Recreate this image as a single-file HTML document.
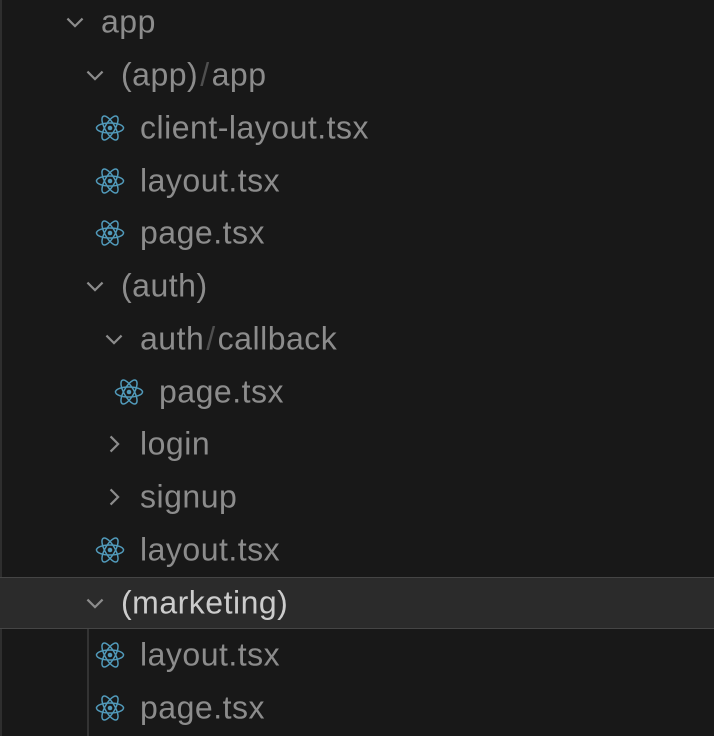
<!DOCTYPE html><html><head><style>
body{margin:0;width:714px;height:736px;background:#181818;overflow:hidden;position:relative;font-family:"Liberation Sans",sans-serif;}
.r{position:absolute;left:0;width:714px;height:52px;}
.t{position:absolute;top:50%;transform:translateY(-50%);font-size:32px;letter-spacing:0.5px;color:#8c8c8c;white-space:nowrap;}
.s{color:#4f4f4f;margin:0 2px}
.c,.i{position:absolute;top:50%;transform:translateY(-50%);}
.sel{background:#2b2b2b;border-top:1px solid #454545;border-bottom:1px solid #454545;}
</style></head><body>
<div style="position:absolute;left:0;top:0;width:2px;height:736px;background:#2e2e2e"></div>
<div style="position:absolute;left:87px;top:629px;width:2px;height:107px;background:#333"></div>
<svg width="0" height="0" style="position:absolute"><defs>
<symbol id="dn" viewBox="0 0 16 16"><path d="M2.5 5.5l5.5 5.5 5.5-5.5" fill="none" stroke="#8c8c8c" stroke-width="1.6"/></symbol>
<symbol id="rt" viewBox="0 0 16 16"><path d="M5.5 2.5l5.5 5.5-5.5 5.5" fill="none" stroke="#8c8c8c" stroke-width="1.6"/></symbol>
<symbol id="at" viewBox="0 0 30 28"><g fill="none" stroke="#519aba" stroke-width="1.5" transform="translate(15 14)"><ellipse rx="13.5" ry="5"/><ellipse rx="13.5" ry="5" transform="rotate(60)"/><ellipse rx="13.5" ry="5" transform="rotate(120)"/></g><circle cx="15" cy="14" r="2.3" fill="#519aba"/></symbol>
</defs></svg>
<div class="r" style="top:-4px"><svg class="c" style="left:64px" width="22" height="22"><use href="#dn"/></svg><span class="t" style="left:101px">app</span></div>
<div class="r" style="top:49px"><svg class="c" style="left:84px" width="22" height="22"><use href="#dn"/></svg><span class="t" style="left:121px">(app)<span class="s">/</span>app</span></div>
<div class="r" style="top:102px"><svg class="i" style="left:95px" width="30" height="28"><use href="#at"/></svg><span class="t" style="left:140px">client-layout.tsx</span></div>
<div class="r" style="top:155px"><svg class="i" style="left:95px" width="30" height="28"><use href="#at"/></svg><span class="t" style="left:140px">layout.tsx</span></div>
<div class="r" style="top:207px"><svg class="i" style="left:95px" width="30" height="28"><use href="#at"/></svg><span class="t" style="left:140px">page.tsx</span></div>
<div class="r" style="top:260px"><svg class="c" style="left:84px" width="22" height="22"><use href="#dn"/></svg><span class="t" style="left:121px">(auth)</span></div>
<div class="r" style="top:313px"><svg class="c" style="left:103px" width="22" height="22"><use href="#dn"/></svg><span class="t" style="left:140px">auth<span class="s">/</span>callback</span></div>
<div class="r" style="top:366px"><svg class="i" style="left:114px" width="30" height="28"><use href="#at"/></svg><span class="t" style="left:159px">page.tsx</span></div>
<div class="r" style="top:418px"><svg class="c" style="left:103px" width="22" height="22"><use href="#rt"/></svg><span class="t" style="left:140px">login</span></div>
<div class="r" style="top:471px"><svg class="c" style="left:103px" width="22" height="22"><use href="#rt"/></svg><span class="t" style="left:140px">signup</span></div>
<div class="r" style="top:524px"><svg class="i" style="left:95px" width="30" height="28"><use href="#at"/></svg><span class="t" style="left:140px">layout.tsx</span></div>
<div class="r sel" style="top:577px;height:50px"><svg class="c" style="left:84px" width="22" height="22"><use href="#dn"/></svg><span class="t" style="left:121px;color:#cccccc">(marketing)</span></div>
<div class="r" style="top:629px"><svg class="i" style="left:95px" width="30" height="28"><use href="#at"/></svg><span class="t" style="left:140px">layout.tsx</span></div>
<div class="r" style="top:682px"><svg class="i" style="left:95px" width="30" height="28"><use href="#at"/></svg><span class="t" style="left:140px">page.tsx</span></div>
</body></html>
